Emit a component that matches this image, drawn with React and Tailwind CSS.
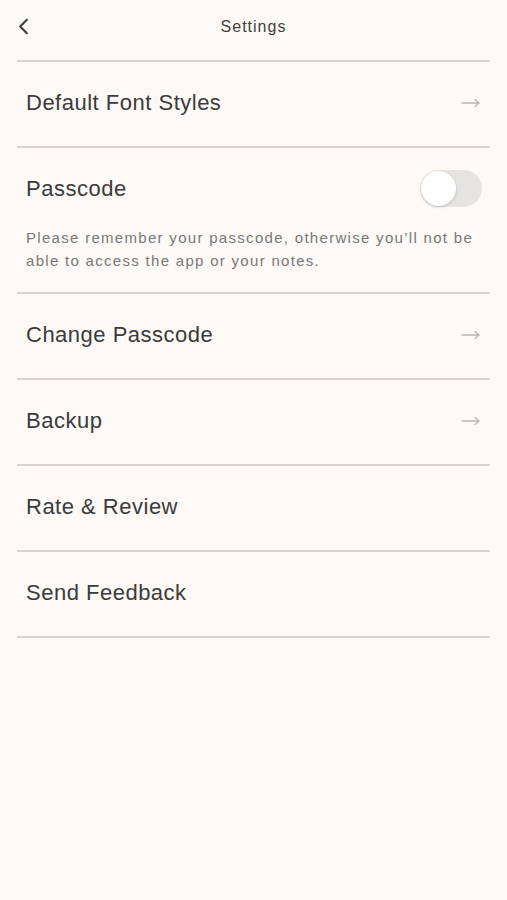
import { ChevronLeft } from 'lucide-react'

const rows = [
  { label: 'Change Passcode', arrow: true },
  { label: 'Backup', arrow: true },
  { label: 'Rate & Review' },
  { label: 'Send Feedback' },
]

function Arrow() {
  return (
    <svg width="20" height="10" viewBox="0 0 20 10" fill="none" stroke="#b9b6b3" strokeWidth="1.3" strokeLinecap="round">
      <path d="M1 5h17M14 1.5 18 5l-4 3.5" />
    </svg>
  )
}

function Row({ label, arrow }) {
  return (
    <div className="h-[86px] flex items-center justify-between pl-[9px] pr-[9px] pb-[3px] border-b-2 border-[#d6d3d0]">
      <span className="text-[22px] tracking-[0.5px] text-[#3b3b3b]">{label}</span>
      {arrow && <Arrow />}
    </div>
  )
}

export default function App() {
  return (
    <div className="min-h-[900px] bg-[#fcf9f6] px-[17px]" style={{ fontFamily: '"Liberation Sans", Arial, sans-serif' }}>
      {/* 顶栏 */}
      <div className="relative h-[62px] flex items-center justify-center border-b-2 border-[#d6d3d0]">
        <button className="absolute left-[-7px] top-[13px] text-[#3a3a3a]">
          <ChevronLeft className="w-[27px] h-[27px]" strokeWidth={1.8} />
        </button>
        <span className="text-[16px] tracking-[1px] text-[#3f3f3f] -mt-[6px]">Settings</span>
      </div>

      <Row label="Default Font Styles" arrow />

      {/* 密码 */}
      <div className="h-[146px] pl-[9px] pr-[8px] border-b-2 border-[#d6d3d0]">
        <div className="h-[80px] flex items-center justify-between">
          <span className="text-[22px] tracking-[0.5px] text-[#3b3b3b]">Passcode</span>
          <div className="w-[62px] h-[37px] rounded-full bg-[#e6e4e2] p-[1px] flex items-center mt-[1px]">
            <div className="w-[35px] h-[35px] rounded-full bg-white shadow-[0_1px_3px_rgba(0,0,0,0.2)]" />
          </div>
        </div>
        <p className="text-[15px] leading-[23px] tracking-[1.3px] text-[#7a7877] -mt-[2px]">
          Please remember your passcode, otherwise you’ll not be able to access the app or your notes.
        </p>
      </div>

      {rows.map(r => <Row key={r.label} {...r} />)}
    </div>
  )
}
